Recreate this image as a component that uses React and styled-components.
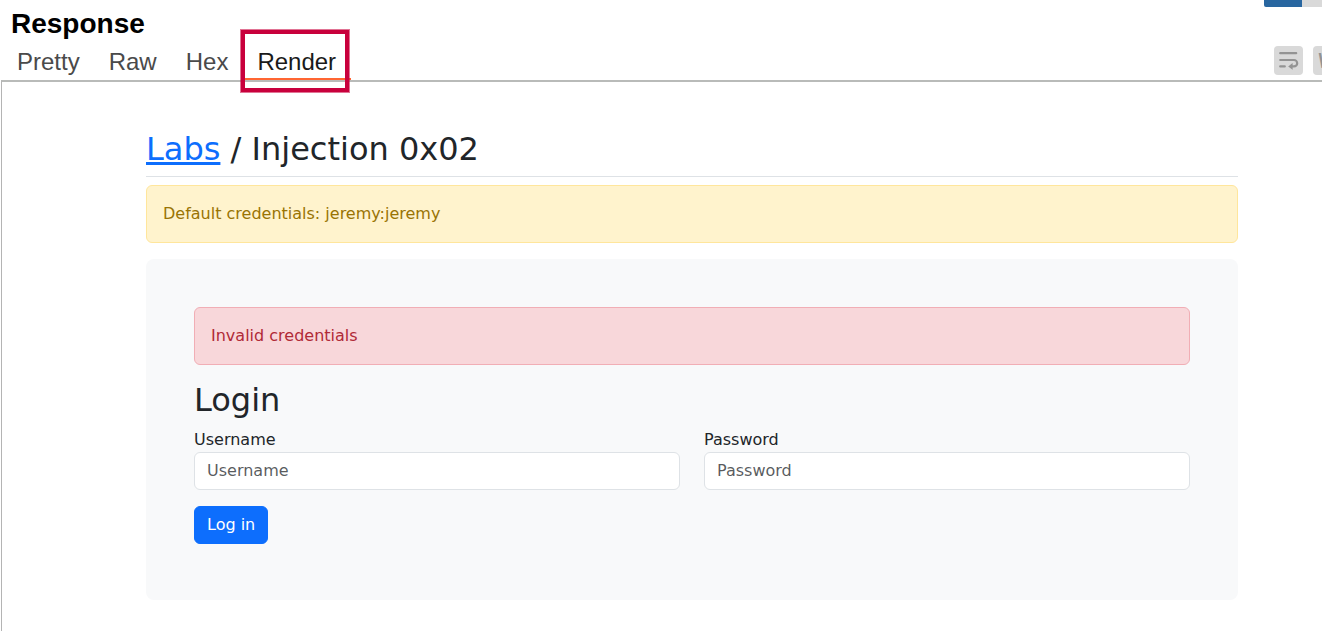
import React from 'react';
import styled, { createGlobalStyle } from 'styled-components';

const GlobalStyle = createGlobalStyle`
  *, *::before, *::after { box-sizing: border-box; }
  html, body, #root { height: 100%; }
  body {
    margin: 0;
    background: #fff;
    color: #212529;
    font: 16px/24px "DejaVu Sans", sans-serif;
  }
`;

const Panel = styled.div`
  min-height: 100%;
  display: flex;
  flex-direction: column;
  overflow: hidden;
`;

const Header = styled.header`
  display: flex;
  justify-content: space-between;
  height: 80px;
  font-family: "Liberation Sans", Arial, sans-serif;
`;

const HeaderMain = styled.div`
  display: flex;
  flex-direction: column;
  justify-content: space-between;
  padding-top: 8px;
`;

const PanelTitle = styled.h2`
  margin: 0;
  padding-left: 11px;
  font-size: 28px;
  line-height: 32px;
  font-weight: 700;
  color: #000;
`;

const Tabs = styled.nav`
  display: flex;
  padding-left: 3px;
`;

const Tab = styled.button`
  position: relative;
  border: 0;
  border-bottom: 2px solid ${({ $active }) => ($active ? '#ff6633' : 'transparent')};
  padding: 0 15px 0 14px;
  background: none;
  font: inherit;
  font-size: 24px;
  line-height: 32px;
  color: ${({ $active }) => ($active ? '#1a1a1a' : '#4a4a4a')};
`;

const Highlight = styled.span`
  position: absolute;
  inset: -16px 2px -14px -2px;
  border: 4px solid #c8003c;
  box-shadow: 0 0 0 1px rgba(200, 0, 60, 0.55);
  pointer-events: none;
`;

const HeaderSide = styled.div`
  display: flex;
  flex-direction: column;
  justify-content: space-between;
  width: 58px;
  padding-bottom: 5px;
`;

const LayoutSwitch = styled.div`
  display: flex;
  height: 7px;
`;

const LayoutButton = styled.button`
  flex: ${({ $active }) => ($active ? '0 0 38px' : '1')};
  border: 0;
  padding: 0;
  border-radius: ${({ $active }) => ($active ? '0 0 0 2px' : '0')};
  background: ${({ $active }) => ($active ? '#2866a0' : '#d9d9d9')};
`;

const Tools = styled.div`
  display: flex;
  gap: 10px;
  padding-left: 10px;
`;

const ToolButton = styled.button`
  flex: none;
  display: flex;
  align-items: center;
  justify-content: center;
  width: 29px;
  height: 29px;
  border: 0;
  border-radius: 4px;
  padding: 0;
  background: #d9d9d9;
  color: #939393;
  font: 700 20px/20px "Liberation Sans", Arial, sans-serif;
`;

const Viewport = styled.main`
  flex: 1;
  margin-left: 1px;
  padding: 48px 84px 31px 144px;
  border-top: 2px solid #b9bbb9;
  border-left: 1px solid #b4b4b4;
`;

const Heading = styled.h1`
  margin: 0 0 8px;
  padding-bottom: 8px;
  border-bottom: 1px solid #dee2e6;
  font-size: 32px;
  line-height: 38px;
  font-weight: 400;
`;

const LabsLink = styled.a`
  color: #0d6efd;
`;

const tones = {
  warning: { color: '#997404', background: '#fff3cd', border: '#ffe69c' },
  danger: { color: '#b02a37', background: '#f8d7da', border: '#f1aeb5' },
};

const Alert = styled.div`
  margin-bottom: 16px;
  border: 1px solid ${({ $tone }) => tones[$tone].border};
  border-radius: 6px;
  padding: 16px;
  background: ${({ $tone }) => tones[$tone].background};
  color: ${({ $tone }) => tones[$tone].color};
`;

const Card = styled.section`
  border-radius: 8px;
  padding: 48px 48px 56px;
  background: #f8f9fa;
`;

const CardTitle = styled.h2`
  margin: 0 0 8px;
  font-size: 32px;
  line-height: 38px;
  font-weight: 400;
`;

const Fields = styled.div`
  display: grid;
  grid-template-columns: 1fr 1fr;
  gap: 24px;
  margin-bottom: 16px;
`;

const Field = styled.label`
  display: flex;
  flex-direction: column;
  padding-top: 1px;
`;

const Input = styled.input`
  width: 100%;
  height: 38px;
  border: 1px solid #dee2e6;
  border-radius: 6px;
  padding: 5px 12px 7px;
  background: #fff;
  color: #212529;
  font: inherit;
  &::placeholder { color: rgba(33, 37, 41, 0.75); opacity: 1; }
`;

const SubmitButton = styled.button`
  display: block;
  border: 1px solid #0d6efd;
  border-radius: 6px;
  padding: 6px 12px;
  background: #0d6efd;
  color: #fff;
  font: inherit;
`;

const WrapIcon = () => (
  <svg
    width="21"
    height="21"
    viewBox="0 0 21 21"
    fill="none"
    stroke="currentColor"
    strokeWidth="2.2"
    strokeLinecap="round"
    aria-hidden="true"
  >
    <path d="M2.2 3.2h16M2.2 10h13.8a3.2 3.2 0 0 1 0 6.4H14M2.2 16.4h4.6" />
    <path d="M10.2 16.4l4.4-3.4v6.8z" fill="currentColor" stroke="none" />
  </svg>
);

export default function App() {
  return (
    <>
      <GlobalStyle />
      <Panel>
        <Header>
          <HeaderMain>
            <PanelTitle>Response</PanelTitle>
            <Tabs>
              <Tab>Pretty</Tab>
              <Tab>Raw</Tab>
              <Tab>Hex</Tab>
              <Tab $active>
                Render
                <Highlight />
              </Tab>
            </Tabs>
          </HeaderMain>
          <HeaderSide>
            <LayoutSwitch>
              <LayoutButton $active aria-label="Side by side" />
              <LayoutButton aria-label="Stacked" />
            </LayoutSwitch>
            <Tools>
              <ToolButton aria-label="Wrap lines">
                <WrapIcon />
              </ToolButton>
              <ToolButton>\n</ToolButton>
            </Tools>
          </HeaderSide>
        </Header>
        <Viewport>
          <Heading>
            <LabsLink href="#labs">Labs</LabsLink> / Injection 0x02
          </Heading>
          <Alert $tone="warning">Default credentials: jeremy:jeremy</Alert>
          <Card>
            <Alert $tone="danger">Invalid credentials</Alert>
            <CardTitle>Login</CardTitle>
            <form>
              <Fields>
                <Field>
                  Username
                  <Input type="text" placeholder="Username" />
                </Field>
                <Field>
                  Password
                  <Input type="password" placeholder="Password" />
                </Field>
              </Fields>
              <SubmitButton type="submit">Log in</SubmitButton>
            </form>
          </Card>
        </Viewport>
      </Panel>
    </>
  );
}
